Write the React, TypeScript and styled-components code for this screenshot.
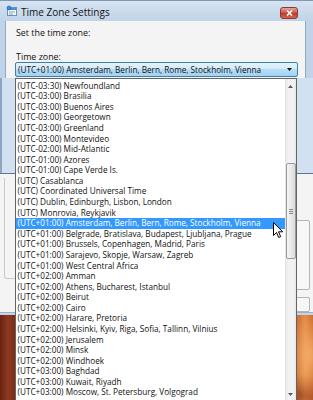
import styled, { createGlobalStyle } from "styled-components";

const GlobalStyle = createGlobalStyle`
  html, body { margin: 0; padding: 0; }
  body {
    font-family: "Open Sans", "Noto Sans", sans-serif;
    background: #7b2b17;
  }
`;

const zones = [
  "(UTC-03:30) Newfoundland",
  "(UTC-03:00) Brasilia",
  "(UTC-03:00) Buenos Aires",
  "(UTC-03:00) Georgetown",
  "(UTC-03:00) Greenland",
  "(UTC-03:00) Montevideo",
  "(UTC-02:00) Mid-Atlantic",
  "(UTC-01:00) Azores",
  "(UTC-01:00) Cape Verde Is.",
  "(UTC) Casablanca",
  "(UTC) Coordinated Universal Time",
  "(UTC) Dublin, Edinburgh, Lisbon, London",
  "(UTC) Monrovia, Reykjavik",
  "(UTC+01:00) Amsterdam, Berlin, Bern, Rome, Stockholm, Vienna",
  "(UTC+01:00) Belgrade, Bratislava, Budapest, Ljubljana, Prague",
  "(UTC+01:00) Brussels, Copenhagen, Madrid, Paris",
  "(UTC+01:00) Sarajevo, Skopje, Warsaw, Zagreb",
  "(UTC+01:00) West Central Africa",
  "(UTC+02:00) Amman",
  "(UTC+02:00) Athens, Bucharest, Istanbul",
  "(UTC+02:00) Beirut",
  "(UTC+02:00) Cairo",
  "(UTC+02:00) Harare, Pretoria",
  "(UTC+02:00) Helsinki, Kyiv, Riga, Sofia, Tallinn, Vilnius",
  "(UTC+02:00) Jerusalem",
  "(UTC+02:00) Minsk",
  "(UTC+02:00) Windhoek",
  "(UTC+03:00) Baghdad",
  "(UTC+03:00) Kuwait, Riyadh",
  "(UTC+03:00) Moscow, St. Petersburg, Volgograd",
];

const SELECTED = 13;

const Screen = styled.div`
  position: relative;
  width: 313px;
  height: 400px;
  overflow: hidden;
  display: flex;
  flex-direction: column;
  font-size: 8.2px;
  color: #111;
`;

const ChildDialog = styled.div`
  display: flex;
  flex-direction: column;
  height: 174px;
  border-bottom: 1px solid #5d7692;
  box-sizing: border-box;
`;

const TitleBar = styled.div`
  height: 21px;
  display: flex;
  align-items: center;
  padding: 0 15px 0 6px;
  background: linear-gradient(#d6e3f1, #c0d3e9);
  border-top: 1px solid #7f98b4;
  box-sizing: border-box;
  gap: 3px;
`;

const Title = styled.span`
  flex: 1;
  font-size: 10px;
  color: #111;
  padding-top: 1px;
`;

const CloseButton = styled.div`
  width: 16px;
  height: 10px;
  border-radius: 3px;
  border: 1px solid #8a3a36;
  background: linear-gradient(#e9a79b, #c9503f 50%, #b8392a 51%, #d4684f);
  display: flex;
  align-items: center;
  justify-content: center;
  margin-top: 3px;
`;

const Upper = styled.div`
  display: flex;
  height: 57px;
`;

const Frame = styled.div<{ w: number }>`
  width: ${(p) => p.w}px;
  background: #c0d3e9;
`;

const Client = styled.div`
  flex: 1;
  background: #f4f4f4;
  border-left: 1px solid #91a8c1;
  border-right: 1px solid #91a8c1;
  display: flex;
  flex-direction: column;
  padding: 7px 0 0 10px;
`;

const Label = styled.div<{ gap?: number }>`
  height: 10px;
  line-height: 10px;
  font-size: 8.9px;
  margin-bottom: ${(p) => p.gap ?? 0}px;
`;

const Combo = styled.div`
  width: 283px;
  height: 15px;
  margin-left: -1px;
  box-sizing: border-box;
  border: 1px solid #3c7fb1;
  border-radius: 2px;
  background: linear-gradient(#e6f3fc, #d3ebfa 45%, #b7ddf6 50%, #a3d2f0);
  display: flex;
  align-items: center;
  padding: 0 5px 0 2px;
`;

const ComboText = styled.span`
  flex: 1;
  line-height: 13px;
`;

const BluePanel = styled.div`
  flex: 1;
  background: #d2e1f2;
  border-left: 2px solid #8ea6c0;
`;

const ParentDialog = styled.div`
  height: 141px;
  display: flex;
  flex-direction: column;
`;

const ParentBody = styled.div`
  flex: 1;
  background: #f4f4f4;
  display: flex;
  justify-content: space-between;
  padding-top: 4px;
`;

const GroupBox = styled.div`
  width: 40px;
  height: 100px;
  margin-left: 4px;
  border: 1px solid #c9c9c9;
  border-top: none;
  border-radius: 0 0 3px 3px;
`;

const SideColumn = styled.div`
  display: flex;
  flex-direction: column;
  gap: 7px;
  margin-right: 3px;
  padding-top: 42px;
`;

const SideBox = styled.div<{ h: number }>`
  width: 40px;
  height: ${(p) => p.h}px;
  border: 1px solid #b5b5b5;
  border-radius: 2px;
  background: #f7f7f7;
`;

const BottomFrame = styled.div`
  height: 9px;
  background: linear-gradient(#c9daee, #b9cfe7);
  border-top: 1px solid #99b0c9;
`;

const Wallpaper = styled.div`
  flex: 1;
  background:
    radial-gradient(ellipse 30px 60px at 310px 40px, rgba(255, 190, 120, 0.7), transparent 70%),
    radial-gradient(ellipse 40px 30px at 300px 80px, rgba(120, 40, 20, 0.5), transparent 70%),
    linear-gradient(90deg, #6a2212 0px, #8e3a22 8px, #7c2c18 15px, #a84a24 200px, #c86a30 296px, #e38c48 305px, #cf6a2c 313px);
`;

const DropList = styled.div`
  position: absolute;
  left: 15px;
  top: 78px;
  width: 282px;
  height: 324px;
  box-sizing: border-box;
  border: 1px solid #646464;
  background: #fff;
  display: flex;
`;

const Items = styled.div`
  flex: 1;
  padding-top: 1.7px;
  display: flex;
  flex-direction: column;
`;

const Item = styled.div<{ selected?: boolean }>`
  height: 10.59px;
  line-height: 10.59px;
  padding-left: 1.5px;
  white-space: nowrap;
  color: ${(p) => (p.selected ? "#fff" : "#111")};
  background: ${(p) => (p.selected ? "#3399ff" : "transparent")};
`;

const ScrollBar = styled.div`
  width: 11px;
  background: linear-gradient(90deg, #e3e3e3, #f2f2f2 30%, #f2f2f2 80%, #e6e6e6);
  display: flex;
  flex-direction: column;
  align-items: center;
`;

const Arrow = styled.div`
  height: 14px;
  display: flex;
  align-items: center;
  justify-content: center;
`;

const TrackGap = styled.div<{ h: number }>`
  height: ${(p) => p.h}px;
`;

const Thumb = styled.div`
  width: 10px;
  height: 96px;
  box-sizing: border-box;
  border: 1px solid #9a9a9a;
  border-radius: 2px;
  background: linear-gradient(90deg, #f5f5f5, #e9e9e9 50%, #dadada);
  display: flex;
  flex-direction: column;
  align-items: center;
  justify-content: center;
  gap: 1px;
`;

const Grip = styled.div`
  width: 4px;
  height: 1px;
  background: #8a8a8a;
`;

const Filler = styled.div`
  flex: 1;
`;

const Cursor = styled.svg`
  position: absolute;
  left: 273px;
  top: 222px;
`;

const TitleIcon = () => (
  <svg width="12" height="12" viewBox="0 0 12 12">
    <rect x="1.5" y="2.5" width="9" height="8" fill="#f4f8fc" stroke="#6f8fb5" />
    <rect x="2" y="3" width="8" height="2" fill="#4a90d9" />
    <path d="M3 7h6M3 9h4" stroke="#7aa3cf" />
    <circle cx="3" cy="3" r="2" fill="#3a8ee0" stroke="#1f5fa8" strokeWidth="0.6" />
  </svg>
);

export default function App() {
  return (
    <>
      <GlobalStyle />
      <Screen>
        <ChildDialog>
          <TitleBar>
            <TitleIcon />
            <Title>Time Zone Settings</Title>
            <CloseButton>
              <svg width="7" height="6" viewBox="0 0 7 6">
                <path d="M1 0.5l5 5M6 0.5l-5 5" stroke="#fff" strokeWidth="1.6" />
              </svg>
            </CloseButton>
          </TitleBar>
          <Upper>
            <Frame w={5} />
            <Client>
              <Label gap={14}>Set the time zone:</Label>
              <Label>Time zone:</Label>
              <Combo>
                <ComboText>{zones[SELECTED]}</ComboText>
                <svg width="5" height="3" viewBox="0 0 5 3">
                  <path d="M0 0h5L2.5 3z" fill="#111" />
                </svg>
              </Combo>
            </Client>
            <Frame w={7} />
          </Upper>
          <BluePanel />
        </ChildDialog>
        <ParentDialog>
          <ParentBody>
            <GroupBox />
            <SideColumn>
              <SideBox h={68} />
              <SideBox h={13} />
            </SideColumn>
          </ParentBody>
          <BottomFrame />
        </ParentDialog>
        <Wallpaper />

        <DropList>
          <Items>
            {zones.map((z, i) => (
              <Item key={z} selected={i === SELECTED}>
                {z}
              </Item>
            ))}
          </Items>
          <ScrollBar>
            <Arrow>
              <svg width="5" height="3" viewBox="0 0 5 3">
                <path d="M0 3h5L2.5 0z" fill="#5a5a5a" />
              </svg>
            </Arrow>
            <TrackGap h={70} />
            <Thumb>
              <Grip />
              <Grip />
              <Grip />
            </Thumb>
            <Filler />
            <Arrow>
              <svg width="5" height="3" viewBox="0 0 5 3">
                <path d="M0 0h5L2.5 3z" fill="#5a5a5a" />
              </svg>
            </Arrow>
          </ScrollBar>
        </DropList>

        <Cursor width="12" height="17" viewBox="0 0 12 17">
          <path
            d="M0.5 0.5v13l3-3 2.2 5 2-0.9-2.2-4.8h4.2z"
            fill="#fff"
            stroke="#000"
            strokeWidth="1"
          />
        </Cursor>
      </Screen>
    </>
  );
}
